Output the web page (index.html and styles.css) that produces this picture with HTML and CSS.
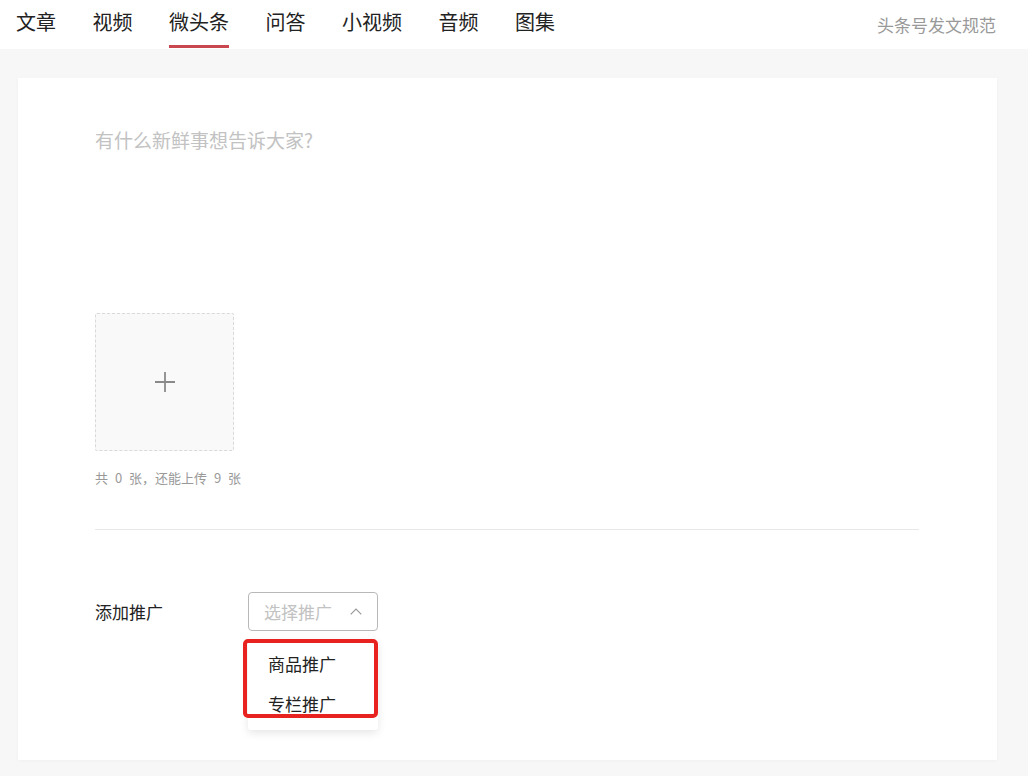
FILE: index.html
```html
<!DOCTYPE html>
<html lang="zh-CN">
<head>
  <meta charset="UTF-8">
  <title>微头条</title>
  <link rel="stylesheet" href="styles.css">
</head>
<body>
  <div class="topbar">
    <div class="tabs">
      <div class="tab">文章</div>
      <div class="tab">视频</div>
      <div class="tab active">微头条</div>
      <div class="tab">问答</div>
      <div class="tab">小视频</div>
      <div class="tab">音频</div>
      <div class="tab">图集</div>
    </div>
    <a class="rules-link">头条号发文规范</a>
  </div>

  <div class="main">
    <div class="card">
      <div class="editor">有什么新鲜事想告诉大家?</div>

      <div class="upload-box">
        <svg width="20" height="20" viewBox="0 0 20 20">
          <path d="M10 0v20M0 10h20" stroke="#8a8a8a" stroke-width="1.8" fill="none"/>
        </svg>
      </div>
      <div class="upload-tip">共 0 张，还能上传 9 张</div>

      <div class="divider"></div>

      <div class="promo-row">
        <div class="promo-label">添加推广</div>
        <div class="select-wrap">
          <div class="select">
            <span class="select-placeholder">选择推广</span>
            <svg width="12" height="7" viewBox="0 0 12 7">
              <path d="M0.7 6.3L6 1l5.3 5.3" stroke="#9a9a9a" stroke-width="1.2" fill="none"/>
            </svg>
          </div>
          <div class="dropdown">
            <div class="dropdown-item">商品推广</div>
            <div class="dropdown-item">专栏推广</div>
            <div class="mark"></div>
          </div>
        </div>
      </div>
    </div>
  </div>
</body>
</html>
```

FILE: styles.css
```css
body {
  margin: 0;
  background: #f7f7f8;
  color: #222;
  font-family: "Noto Sans CJK SC", "Noto Sans", sans-serif;
}
.topbar {
  display: flex;
  align-items: center;
  justify-content: space-between;
  height: 49px;
  padding: 0 32px 0 16px;
  background: #fff;
}
.tabs {
  display: flex;
  gap: 36.5px;
  height: 100%;
}
.tab {
  position: relative;
  font-size: 20px;
  line-height: 44px;
  color: #222;
}
.tab.active::after {
  content: "";
  position: absolute;
  left: 0;
  right: 0;
  bottom: 1px;
  height: 3px;
  background: #c9474f;
}
.rules-link {
  font-size: 17px;
  color: #999;
  line-height: 44px;
}
.main {
  padding: 29px 31px 16px 18px;
}
.card {
  background: #fff;
  padding: 40px 78px 129px 77px;
  box-shadow: 0 1px 4px rgba(0, 0, 0, 0.03);
}
.editor {
  height: 195px;
  font-size: 19px;
  line-height: 44px;
  color: #c2c2c2;
}
.upload-box {
  width: 137px;
  height: 136px;
  border: 1px dashed #d9d9d9;
  border-radius: 2px;
  background: #f9f9fa;
  display: flex;
  align-items: center;
  justify-content: center;
}
.upload-tip {
  margin-top: 18px;
  font-size: 13px;
  line-height: 18px;
  word-spacing: 4px;
  color: #999;
}
.divider {
  margin-top: 42px;
  height: 1px;
  background: #e8e8e8;
}
.promo-row {
  display: flex;
  align-items: center;
  margin-top: 62px;
}
.promo-label {
  width: 153px;
  font-size: 17px;
  color: #222;
}
.select-wrap {
  position: relative;
}
.select {
  display: flex;
  align-items: center;
  justify-content: space-between;
  box-sizing: border-box;
  width: 130px;
  height: 39px;
  padding: 0 15px 0 15px;
  border: 1px solid #b8b8b8;
  border-radius: 4px;
}
.select-placeholder {
  font-size: 17px;
  color: #c2c2c2;
}
.dropdown {
  position: absolute;
  top: 48px;
  left: 0;
  width: 130px;
  padding: 4px 0 6px;
  background: #fff;
  border-radius: 3px;
  box-shadow: 0 3px 8px rgba(0, 0, 0, 0.1);
}
.dropdown-item {
  height: 40px;
  line-height: 40px;
  padding-left: 20px;
  font-size: 17px;
  color: #222;
}
.mark {
  position: absolute;
  left: -5px;
  top: -1px;
  width: 127px;
  height: 71px;
  border: 4px solid #e8231f;
  border-radius: 5px;
}
```
